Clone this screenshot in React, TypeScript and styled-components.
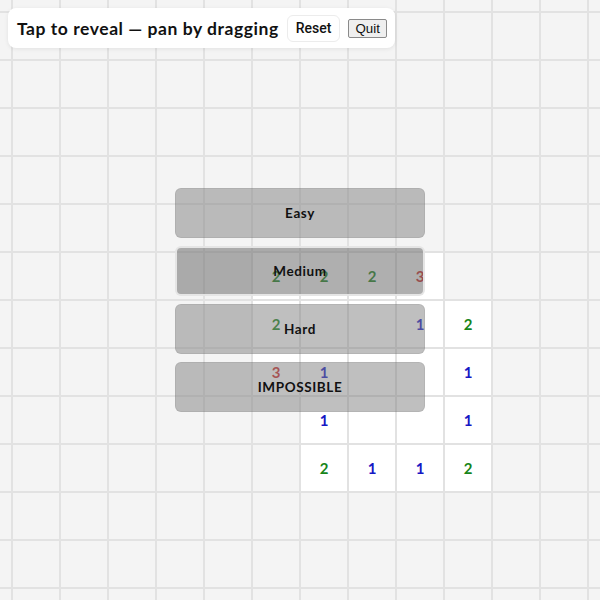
import styled, { createGlobalStyle } from "styled-components";

type CellValue = number | null;

const COLS = 14;
const ROWS = 14;

// revealed cells, keyed by "row,col" in board coordinates (0 = first visible column/row)
const revealed: Record<string, number> = {
  "5,5": 2, "5,6": 2, "5,7": 2, "5,8": 3,
  "6,5": 2, "6,6": 0, "6,7": 0, "6,8": 1, "6,9": 2,
  "7,5": 3, "7,6": 1, "7,7": 0, "7,8": 0, "7,9": 1,
  "8,6": 1, "8,7": 0, "8,8": 0, "8,9": 1,
  "9,6": 2, "9,7": 1, "9,8": 1, "9,9": 2,
};

const numberColors: Record<number, string> = {
  1: "#1717c4",
  2: "#17851a",
  3: "#cc2b2b",
};

const GlobalStyle = createGlobalStyle`
  html, body {
    margin: 0;
    padding: 0;
    background: #f4f4f4;
    overflow: hidden;
  }
  body {
    font-family: "Lato", "Open Sans", sans-serif;
  }
`;

const Viewport = styled.div`
  position: fixed;
  inset: 0;
  overflow: hidden;
  background: #f4f4f4;
`;

const Board = styled.div`
  display: grid;
  grid-template-columns: repeat(${COLS}, 46px);
  grid-auto-rows: 46px;
  gap: 2px;
  background: #e2e2e2;
  width: max-content;
  transform: translate(-35px, -35px);
`;

const Cell = styled.div<{ $open: boolean; $color?: string }>`
  display: flex;
  align-items: center;
  justify-content: center;
  background: ${(p) => (p.$open ? "#ffffff" : "#f4f4f4")};
  color: ${(p) => p.$color || "#222"};
  font-family: "Lato", sans-serif;
  font-weight: 700;
  font-size: 15px;
`;

const Hud = styled.div`
  position: fixed;
  top: 8px;
  left: 8px;
  display: flex;
  align-items: center;
  gap: 8px;
  height: 40px;
  padding: 0 8px 0 9px;
  background: #fff;
  border-radius: 8px;
  box-shadow: 0 1px 4px rgba(0, 0, 0, 0.08);
`;

const Title = styled.h1`
  margin: 0;
  font-family: "Lato", sans-serif;
  font-weight: 700;
  font-size: 17.5px;
  letter-spacing: 0.55px;
  color: #111;
  white-space: nowrap;
`;

const ResetButton = styled.button`
  height: 27px;
  padding: 0 8px;
  background: #fff;
  border: 1px solid #ececec;
  border-radius: 6px;
  font-family: "Roboto", sans-serif;
  font-weight: 500;
  font-size: 14px;
  color: #111;
`;

const QuitButton = styled.button`
  height: 19px;
  padding: 0 6px;
  background: #efefef;
  border: 1px solid #8a8a8a;
  border-radius: 2px;
  font-family: "Liberation Sans", Arial, sans-serif;
  font-size: 13.3px;
  color: #111;
`;

const MenuLayer = styled.div`
  position: fixed;
  inset: 0;
  display: flex;
  align-items: center;
  justify-content: center;
`;

const Menu = styled.div`
  display: flex;
  flex-direction: column;
  gap: 8px;
  width: 250px;
`;

const LevelButton = styled.button<{ $active?: boolean }>`
  height: 50px;
  border-radius: 6px;
  border: ${(p) => (p.$active ? "2px solid rgba(235,235,235,0.9)" : "1px solid rgba(0,0,0,0.06)")};
  background: ${(p) => (p.$active ? "rgba(110,110,110,0.55)" : "rgba(128,128,128,0.5)")};
  font-family: "Lato", sans-serif;
  font-weight: 700;
  font-size: 13.5px;
  letter-spacing: 0.6px;
  color: #111;
`;

function cellValue(r: number, c: number): CellValue {
  const key = `${r},${c}`;
  return key in revealed ? revealed[key] : null;
}

export default function App() {
  const cells = [];
  for (let r = -1; r < ROWS - 1; r++) {
    for (let c = -1; c < COLS - 1; c++) {
      const v = cellValue(r, c);
      cells.push(
        <Cell key={`${r}-${c}`} $open={v !== null} $color={v ? numberColors[v] : undefined}>
          {v ? v : ""}
        </Cell>
      );
    }
  }

  return (
    <>
      <GlobalStyle />
      <Viewport>
        <Board>{cells}</Board>
      </Viewport>
      <MenuLayer>
        <Menu>
          <LevelButton>Easy</LevelButton>
          <LevelButton $active>Medium</LevelButton>
          <LevelButton>Hard</LevelButton>
          <LevelButton>IMPOSSIBLE</LevelButton>
        </Menu>
      </MenuLayer>
      <Hud>
        <Title>Tap to reveal — pan by dragging</Title>
        <ResetButton>Reset</ResetButton>
        <QuitButton>Quit</QuitButton>
      </Hud>
    </>
  );
}
